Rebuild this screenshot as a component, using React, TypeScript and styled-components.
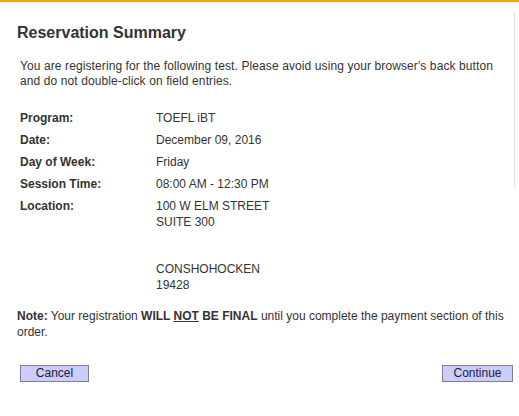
import React from "react";
import styled, { createGlobalStyle } from "styled-components";

const Global = createGlobalStyle`
  html, body { margin: 0; padding: 0; background: #ffffff; }
  body { font-family: "Liberation Sans", Arial, sans-serif; color: #333333; }
`;

const Page = styled.div`
  position: relative;
  width: 519px;
  height: 416px;
  border-top: 2px solid #f7a600;
  box-sizing: border-box;
  background: #fff;
`;

const EdgeLine = styled.div`
  position: absolute;
  left: 514px;
  top: 10px;
  height: 176px;
  width: 0;
  border-left: 1px dotted #cfcfcf;
`;

const Content = styled.div`
  padding: 20px 0 0 17px;
  display: flex;
  flex-direction: column;
`;

const Title = styled.h1`
  margin: 0;
  font-size: 16px;
  font-weight: bold;
  line-height: 22px;
  color: #333;
`;

const Intro = styled.p`
  margin: 15px 0 0 3px;
  font-size: 12px;
  line-height: 15px;
  letter-spacing: 0.1px;
  width: 480px;
`;

const Details = styled.div`
  margin: 22px 0 0 3px;
  display: grid;
  grid-template-columns: 136px 1fr;
  row-gap: 7px;
  font-size: 12px;
  line-height: 15px;
`;

const Label = styled.div`
  font-weight: bold;
`;

const Value = styled.div``;

const AddressLine = styled.div<{ $blank?: boolean }>`
  height: ${(p) => (p.$blank ? "16px" : "auto")};
  line-height: 15.7px;
`;

const Note = styled.p`
  margin: 14px 0 0 0;
  font-size: 12px;
  line-height: 16px;
  width: 490px;
`;

const Strong = styled.b``;
const Under = styled.u``;

const Buttons = styled.div`
  margin: 25px 0 0 3px;
  display: flex;
  justify-content: space-between;
  width: 493px;
`;

const Btn = styled.button<{ $w: number }>`
  width: ${(p) => p.$w}px;
  height: 17px;
  padding: 0;
  box-sizing: border-box;
  background: #ccccff;
  border: 1px solid #7f7f8f;
  font-family: "Liberation Sans", Arial, sans-serif;
  font-size: 12px;
  line-height: 15px;
  color: #1a1a3a;
  cursor: pointer;
`;

const rows: [string, string][] = [
  ["Program:", "TOEFL iBT"],
  ["Date:", "December 09, 2016"],
  ["Day of Week:", "Friday"],
  ["Session Time:", "08:00 AM - 12:30 PM"],
];

export default function App() {
  return (
    <>
      <Global />
      <Page>
        <EdgeLine />
        <Content>
          <Title>Reservation Summary</Title>
          <Intro>
            You are registering for the following test. Please avoid using your browser's back button
            and do not double-click on field entries.
          </Intro>
          <Details>
            {rows.map(([l, v]) => (
              <React.Fragment key={l}>
                <Label>{l}</Label>
                <Value>{v}</Value>
              </React.Fragment>
            ))}
            <Label>Location:</Label>
            <Value>
              <AddressLine>100 W ELM STREET</AddressLine>
              <AddressLine>SUITE 300</AddressLine>
              <AddressLine $blank />
              <AddressLine $blank />
              <AddressLine>CONSHOHOCKEN</AddressLine>
              <AddressLine>19428</AddressLine>
            </Value>
          </Details>
          <Note>
            <Strong>Note:</Strong> Your registration{" "}
            <Strong>
              WILL <Under>NOT</Under> BE FINAL
            </Strong>{" "}
            until you complete the payment section of this order.
          </Note>
          <Buttons>
            <Btn $w={69}>Cancel</Btn>
            <Btn $w={71}>Continue</Btn>
          </Buttons>
        </Content>
      </Page>
    </>
  );
}
